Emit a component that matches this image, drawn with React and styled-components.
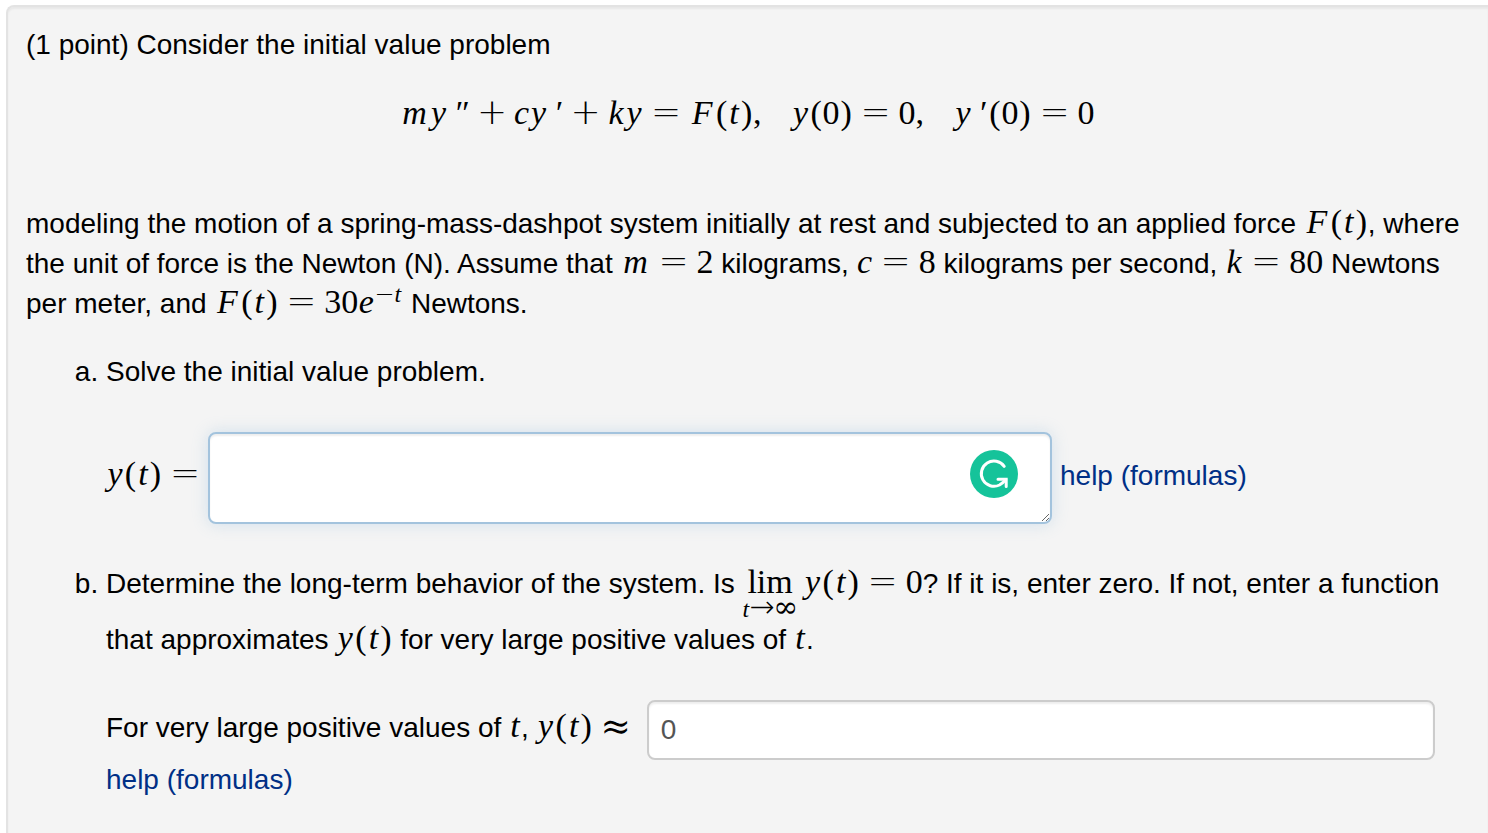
import React from "react";
import styled, { createGlobalStyle } from "styled-components";

const App = () => {
  return (
    <>
      <GlobalStyle />
      <Panel>
        <Text>(1 point) Consider the initial value problem</Text>
        <Display>
          <Var $w={30}>m</Var>
          <Var>y</Var>
          <Prime>″</Prime>
          <Bin>+</Bin>
          <Var $w={16}>c</Var>
          <Var>y</Var>
          <Prime>′</Prime>
          <Bin>+</Bin>
          <Var>k</Var>
          <Var>y</Var>
          <Rel>=</Rel>
          <Fn name="F" />
          <Comma>,</Comma>
          <Fn name="y" arg="0" />
          <Rel>=</Rel>
          <Num>0</Num>
          <Comma>,</Comma>
          <Var>y</Var>
          <Prime>′</Prime>
          <Paren>(</Paren>
          <Num>0</Num>
          <Paren>)</Paren>
          <Rel>=</Rel>
          <Num>0</Num>
        </Display>
        <Text>
          modeling the motion of a spring-mass-dashpot system initially at rest
          and subjected to an applied force{" "}
          <Formula>
            <Fn name="F" />
          </Formula>
          , where the unit of force is the Newton (N). Assume that{" "}
          <Formula>
            <Var $w={30}>m</Var>
            <Rel>=</Rel>
            <Num>2</Num>
          </Formula>{" "}
          kilograms,{" "}
          <Formula>
            <Var $w={16}>c</Var>
            <Rel>=</Rel>
            <Num>8</Num>
          </Formula>{" "}
          kilograms per second,{" "}
          <Formula>
            <Var>k</Var>
            <Rel>=</Rel>
            <Num>80</Num>
          </Formula>{" "}
          Newtons per meter, and{" "}
          <Formula>
            <Fn name="F" />
            <Rel>=</Rel>
            <Num>30</Num>
            <Var $w={16}>e</Var>
            <Power>
              <Symbol>−</Symbol>
              <i>t</i>
            </Power>
          </Formula>{" "}
          Newtons.
        </Text>
        <Parts>
          <Part>
            <Text>Solve the initial value problem.</Text>
            <AnswerRow>
              <Label htmlFor="solution">
                <Formula>
                  <Fn name="y" />
                  <Rel>=</Rel>
                </Formula>
              </Label>
              <AreaWrap>
                <AnswerArea id="solution" />
                <Badge type="button" aria-label="Check writing">
                  <BadgeIcon />
                </Badge>
              </AreaWrap>
              <Link href="#formulas">help (formulas)</Link>
            </AnswerRow>
          </Part>
          <Part>
            <Text>
              Determine the long-term behavior of the system. Is{" "}
              <Formula>
                <Limit>
                  <span>lim</span>
                  <Under>
                    <i>t</i>
                    <Symbol>→</Symbol>
                    <Curved>∞</Curved>
                  </Under>
                </Limit>
                <Fn name="y" />
                <Rel>=</Rel>
                <Num>0</Num>
              </Formula>
              ? If it is, enter zero. If not, enter a function that approximates{" "}
              <Formula>
                <Fn name="y" />
              </Formula>{" "}
              for very large positive values of{" "}
              <Formula>
                <Var $w={12}>t</Var>
              </Formula>
              .
            </Text>
            <LimitRow>
              <Label htmlFor="limit">
                For very large positive values of{" "}
                <Formula>
                  <Var $w={12}>t</Var>
                </Formula>
                ,{" "}
                <Formula>
                  <Fn name="y" />
                  <Rel as={Curved}>≈</Rel>
                </Formula>
              </Label>
              <AnswerInput id="limit" type="text" defaultValue="0" />
            </LimitRow>
            <Link href="#formulas">help (formulas)</Link>
          </Part>
        </Parts>
      </Panel>
    </>
  );
};

const Fn = ({ name, arg = "t" }) => (
  <>
    <Var $w={name === "F" ? 26 : 18}>{name}</Var>
    <Paren>(</Paren>
    {arg === "t" ? <Var $w={12}>t</Var> : <Num>{arg}</Num>}
    <Paren>)</Paren>
  </>
);

const BadgeIcon = () => (
  <svg width="48" height="48" viewBox="0 0 48 48" aria-hidden="true">
    <circle cx="24" cy="24" r="24" fill="#15c39a" />
    <path
      d="M34.2 16.4A12.6 12.6 0 1 0 29.5 35Q33 33 35.8 29.8"
      fill="none"
      stroke="#fff"
      strokeWidth="3"
      strokeLinecap="round"
    />
    <path
      d="M28 29.3H36.2V36.6"
      fill="none"
      stroke="#fff"
      strokeWidth="3"
      strokeLinecap="round"
      strokeLinejoin="miter"
    />
  </svg>
);

const GlobalStyle = createGlobalStyle`
  * {
    box-sizing: border-box;
  }
  body {
    margin: 0;
    background: #fff;
    color: #000;
    font-family: "Liberation Sans", Arial, sans-serif;
    font-size: 28px;
    line-height: 40px;
  }
`;
const Panel = styled.main`
  min-height: calc(100vh - 5px);
  margin: 5px 0 0 6px;
  padding: 18px 20px 18px 18px;
  background: #f4f4f4;
  border: 2px solid #e3e3e3;
  border-width: 2px 0 0 2px;
  border-radius: 8px 0 0 0;
  box-shadow: inset 0 2px 2px rgba(0, 0, 0, 0.05);
`;
const Text = styled.p`
  margin: 0;
`;
const Formula = styled.span`
  display: inline-flex;
  align-items: baseline;
  font-family: "Liberation Serif", "Times New Roman", serif;
  font-size: 34px;
  line-height: 34px;
  white-space: nowrap;
`;
const Display = styled(Formula)`
  display: flex;
  justify-content: center;
  margin: 30px 0 74px;
`;
const Var = styled.i`
  width: ${({ $w = 18 }) => $w}px;
  text-align: center;
`;
const Num = styled.span``;
const Paren = styled.span`
  width: 13px;
  text-align: center;
`;
const Comma = styled.span`
  margin-right: 30px;
`;
const Prime = styled.i`
  margin: 0 3px 0 6px;
`;
const Symbol = styled.span`
  font-family: "DejaVu Sans", sans-serif;
  font-weight: 200;
`;
const Curved = styled.span`
  font-family: "DejaVu Math TeX Gyre", "DejaVu Sans", sans-serif;
`;
const Rel = styled(Symbol)`
  width: 46px;
  font-size: 36px;
  text-align: center;
`;
const Bin = styled(Rel)`
  width: 43px;
`;
const Power = styled.sup`
  align-self: flex-start;
  margin-right: 2px;
  font-size: 24px;
  line-height: 20px;
`;
const Limit = styled.span`
  display: inline-flex;
  flex-direction: column;
  align-items: center;
  margin-right: 6px;
`;
const Under = styled.span`
  padding-bottom: 3px;
  font-size: 24px;
  line-height: 16px;

  ${Symbol}, ${Curved} {
    font-size: 30px;
  }
`;
const Parts = styled.ol`
  margin: 28px 0 0;
  padding-left: 80px;
  list-style: lower-alpha;
`;
const Part = styled.li`
  & + & {
    margin-top: 40px;
  }
`;
const Label = styled.label`
  flex: none;
  padding-bottom: 4px;
`;
const Link = styled.a`
  color: #002f86;
  text-decoration: none;
`;
const AnswerRow = styled.div`
  display: flex;
  align-items: center;
  margin-top: 40px;

  ${Link} {
    padding-bottom: 4px;
  }
`;
const LimitRow = styled.div`
  display: flex;
  align-items: center;
  gap: 8px;
  margin: 40px 33px 0 0;
`;
const AreaWrap = styled.div`
  position: relative;
  display: flex;
  flex: 0 1 844px;
  margin-right: 8px;
`;
const AnswerArea = styled.textarea`
  width: 100%;
  height: 92px;
  padding: 8px 12px;
  background: #fff;
  border: 2px solid #a3c3dd;
  border-radius: 8px;
  outline: none;
  box-shadow: inset 0 2px 2px rgba(0, 0, 0, 0.07),
    0 0 16px rgba(130, 180, 220, 0.3);
  color: #555;
  font: inherit;
`;
const Badge = styled.button`
  position: absolute;
  top: 18px;
  right: 34px;
  width: 48px;
  height: 48px;
  padding: 0;
  background: none;
  border: 0;
  border-radius: 50%;
`;
const AnswerInput = styled.input`
  flex: 1;
  min-width: 0;
  height: 60px;
  padding: 8px 12px;
  background: #fff;
  border: 2px solid #ccc;
  border-radius: 8px;
  box-shadow: inset 0 2px 2px rgba(0, 0, 0, 0.07);
  color: #555;
  font: inherit;
`;

export default App;
